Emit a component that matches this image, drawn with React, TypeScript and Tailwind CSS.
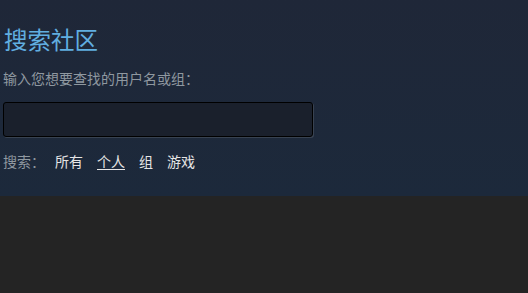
import React from 'react';

const font = { fontFamily: '"Noto Sans CJK SC", "Liberation Sans", sans-serif' };

export default function App() {
  const links = ['所有', '个人', '组', '游戏'];
  return (
    <div className="flex h-[293px] w-full flex-col bg-[#242424]" style={font}>
      <div className="h-[196px] bg-gradient-to-b from-[#1f2738] to-[#1c293b] pl-[3px] pt-[23px]">
        <h1 className="pl-[1px] text-[23.5px] leading-[32px] font-normal text-[#61aee0]">搜索社区</h1>
        <p className="mt-[13px] text-[14px] leading-[20px] text-[#8f98a0]">输入您想要查找的用户名或组：</p>
        <input
          type="text"
          className="mt-[14px] block h-[35px] w-[310px] rounded-[3px] border border-black bg-[#1a202c] px-2 text-[13px] text-white shadow-[1px_1px_0_rgba(255,255,255,0.12)] outline-none"
        />
        <div className="mt-[14px] flex items-center text-[14px] leading-[20px]">
          <span className="text-[#8f98a0]">搜索：</span>
          <div className="ml-[10px] flex gap-[14px]">
            {links.map((l) => (
              <span key={l} className={l === '个人' ? 'text-[#e5e5e5] underline underline-offset-2' : 'text-[#e5e5e5]'}>
                {l}
              </span>
            ))}
          </div>
        </div>
      </div>
      <div className="flex-1 bg-[#242424]" />
    </div>
  );
}
